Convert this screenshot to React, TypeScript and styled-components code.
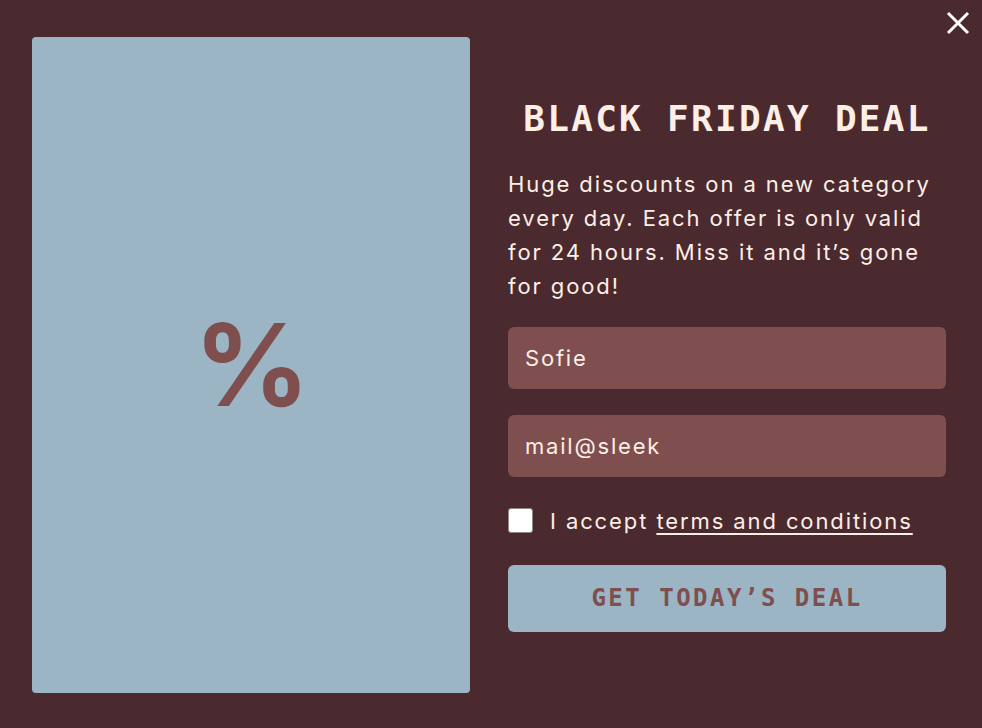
import styled, { createGlobalStyle } from 'styled-components';

const GlobalStyle = createGlobalStyle`
  html, body {
    margin: 0;
    padding: 0;
    background-color: #4a2a2f;
  }
  * {
    box-sizing: border-box;
  }
`;

const Modal = styled.div`
  position: relative;
  width: 982px;
  height: 728px;
  background-color: #4a2a2f;
  display: grid;
  grid-template-columns: 438px 438px;
  column-gap: 38px;
  padding: 37px 36px 35px 32px;
  font-family: Inter, 'Liberation Sans', sans-serif;
  color: #fdeee6;
`;

const CloseButton = styled.button`
  position: absolute;
  top: 9px;
  right: 10px;
  width: 28px;
  height: 28px;
  padding: 0;
  border: none;
  background: none;
  cursor: pointer;
  display: flex;
  align-items: center;
  justify-content: center;
`;

const ImagePanel = styled.div`
  background-color: #9bb5c4;
  border-radius: 4px;
  display: flex;
  align-items: center;
  justify-content: center;
`;

const PercentSign = styled.span`
  font-family: Inter, sans-serif;
  font-weight: 700;
  font-size: 114px;
  line-height: 1;
  color: #7f4e4e;
  margin: 0 0 0 2px;
`;

const FormColumn = styled.div`
  display: flex;
  flex-direction: column;
  justify-content: center;
`;

const Title = styled.h1`
  margin: 0 0 28px;
  font-family: 'DejaVu Sans Mono', monospace;
  font-weight: 700;
  font-size: 36px;
  letter-spacing: 2.3px;
  line-height: 40px;
  text-align: center;
`;

const Description = styled.p`
  margin: 0 0 24px;
  font-size: 22px;
  letter-spacing: 1.9px;
  line-height: 34px;
  font-weight: 400;
`;

const TextInput = styled.input`
  width: 100%;
  height: 62px;
  border: none;
  border-radius: 6px;
  background-color: #7f4e4e;
  color: #fdeee6;
  font-family: Inter, 'Liberation Sans', sans-serif;
  font-size: 22px;
  letter-spacing: 1.8px;
  padding: 0 17px;
  margin-bottom: 26px;
  outline: none;
  caret-color: #fdeee6;
`;

const CheckRow = styled.label`
  display: flex;
  align-items: center;
  gap: 17px;
  margin: 5px 0 31px;
  font-size: 22px;
  letter-spacing: 1.9px;
  line-height: 26px;
`;

const CheckBox = styled.input`
  appearance: none;
  width: 25px;
  height: 25px;
  margin: 0;
  border: 1.5px solid #8a8a8a;
  border-radius: 3px;
  background-color: #ffffff;
`;

const TermsLink = styled.a`
  color: #fdeee6;
  text-decoration: underline;
  text-underline-offset: 4px;
  text-decoration-thickness: 1.5px;
`;

const SubmitButton = styled.button`
  width: 100%;
  height: 67px;
  border: none;
  border-radius: 6px;
  background-color: #9bb5c4;
  color: #7f4e4e;
  font-family: 'DejaVu Sans Mono', monospace;
  font-weight: 700;
  font-size: 24px;
  letter-spacing: 2.5px;
  cursor: pointer;
`;

const App = () => {
  return (
    <>
      <GlobalStyle />
      <Modal>
        <CloseButton aria-label="Close">
          <svg width="24" height="24" viewBox="0 0 24 24" fill="none">
            <path d="M2 2 L22 22 M22 2 L2 22" stroke="#ffffff" strokeWidth="3" strokeLinecap="butt" />
          </svg>
        </CloseButton>
        <ImagePanel>
          <PercentSign>%</PercentSign>
        </ImagePanel>
        <FormColumn>
          <Title>BLACK FRIDAY DEAL</Title>
          <Description>
            Huge discounts on a new category every day. Each offer is only valid for 24 hours. Miss it and it’s gone for good!
          </Description>
          <TextInput type="text" defaultValue="Sofie" />
          <TextInput type="email" defaultValue="mail@sleek" autoFocus />
          <CheckRow>
            <CheckBox type="checkbox" />
            <span>
              I accept <TermsLink href="#">terms and conditions</TermsLink>
            </span>
          </CheckRow>
          <SubmitButton>GET TODAY’S DEAL</SubmitButton>
        </FormColumn>
      </Modal>
    </>
  );
};

export default App;
